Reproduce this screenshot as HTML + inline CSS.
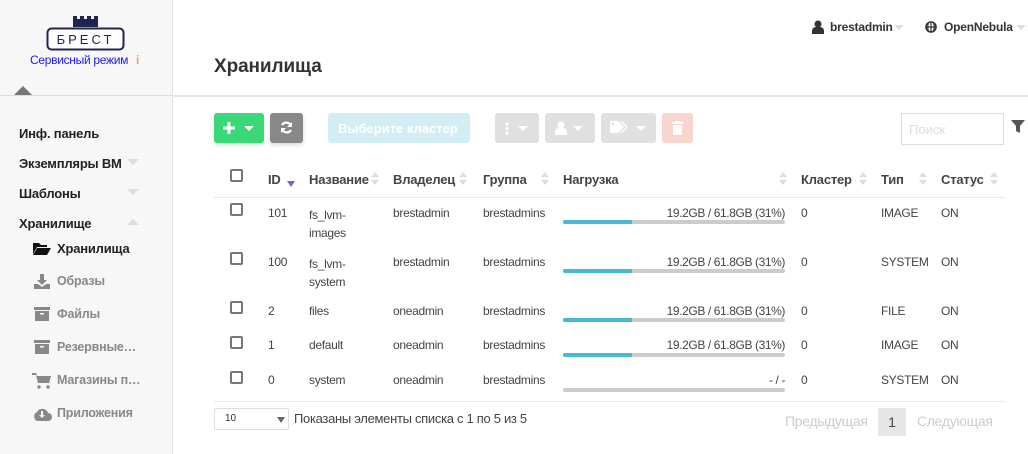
<!DOCTYPE html>
<html><head><meta charset="utf-8"><style>
*{margin:0;padding:0;box-sizing:border-box}
body{width:1028px;height:454px;overflow:hidden;background:#fff;font-family:"Liberation Sans","DejaVu Sans",sans-serif;position:relative;color:#333}
.a{position:absolute;white-space:nowrap}
#side{position:absolute;left:0;top:0;width:173px;height:454px;background:#f7f7f7;border-right:1px solid #e2e2e2}
.nav{font-size:13px;font-weight:bold;color:#222;letter-spacing:-0.2px}
.sub{font-size:12.5px;font-weight:bold;color:#888;letter-spacing:-0.2px}
.caret{width:0;height:0;border-left:6px solid transparent;border-right:6px solid transparent;border-top:6px solid #ddd;position:absolute}
.th{font-size:13px;font-weight:bold;color:#444;letter-spacing:-0.2px}
.td{font-size:12px;color:#444;letter-spacing:-0.3px}
.pct{position:absolute;right:243px;font-size:12px;color:#444;letter-spacing:-0.4px}
.cb{position:absolute;width:13px;height:13px;border:2px solid #777;border-radius:2px}
.bar{position:absolute;left:563px;width:222px;height:4px;background:#ccc;border-radius:2px}
.bar i{display:block;height:4px;width:69px;background:#4ab8d4;border-radius:2px 0 0 2px}
.btn{position:absolute;top:113px;height:30px;border-radius:3px}
</style></head><body>
<div id="side">
<svg class="a" style="left:46px;top:15px" width="79" height="37" viewBox="0 0 79 37">
<path d="M27 1h4v3h3v-3h4v3h3v-3h4v3h3v-3h4v11h-25z" fill="#1f2450"/>
<rect x="1.5" y="13.5" width="76" height="21" rx="4" fill="#fff" stroke="#1f2450" stroke-width="2"/>
<text x="39.5" y="29" text-anchor="middle" font-family="Liberation Sans" font-size="13" fill="#1f2450" letter-spacing="3">БРЕСТ</text>
</svg>
<div class="a" style="left:30px;top:53px;font-size:12px;color:#1a1af0;letter-spacing:-0.3px">Сервисный режим</div>
<div class="a" style="left:136px;top:53px;font-size:12px;color:#f0a070;font-weight:bold">i</div>
<div class="a" style="left:13px;top:86px;width:0;height:0;border-left:10px solid transparent;border-right:10px solid transparent;border-bottom:10px solid #777"></div>
<div class="a" style="left:0;top:95px;width:173px;border-top:1px solid #ddd"></div>
<div class="a nav" style="left:19px;top:126px">Инф. панель</div>
<div class="a nav" style="left:19px;top:156px">Экземпляры ВМ</div><div class="caret" style="left:127px;top:159px"></div>
<div class="a nav" style="left:19px;top:186px">Шаблоны</div><div class="caret" style="left:127px;top:189px"></div>
<div class="a nav" style="left:19px;top:216px">Хранилище</div><div class="a" style="left:127px;top:219px;border-left:6px solid transparent;border-right:6px solid transparent;border-bottom:6px solid #ddd"></div>
<svg class="a" style="left:33px;top:242px" width="18" height="13" viewBox="0 0 18 13"><path d="M0 1h6l2 2h6v2H4L0 12z M4 6h14l-4 7H0z" fill="#111"/></svg>
<div class="a nav" style="left:57px;top:241px">Хранилища</div>
<svg class="a" style="left:34px;top:274px" width="16" height="15" viewBox="0 0 16 15"><path d="M6 0h4v6h3l-5 5-5-5h3z M0 10h4l4 3 4-3h4v5H0z" fill="#888"/></svg>
<div class="a sub" style="left:57px;top:274px">Образы</div>
<svg class="a" style="left:34px;top:307px" width="16" height="14" viewBox="0 0 16 14"><path d="M0 0h16v3H0z M1 4h14v10H1z" fill="#888"/><rect x="6" y="6" width="4" height="1.5" fill="#f7f7f7"/></svg>
<div class="a sub" style="left:57px;top:307px">Файлы</div>
<svg class="a" style="left:34px;top:340px" width="16" height="14" viewBox="0 0 16 14"><path d="M0 0h16v3H0z M1 4h14v10H1z" fill="#888"/><rect x="6" y="6" width="4" height="1.5" fill="#f7f7f7"/></svg>
<div class="a sub" style="left:57px;top:340px">Резервные…</div>
<svg class="a" style="left:32px;top:373px" width="19" height="16" viewBox="0 0 19 16"><path d="M0 0h4l1 3h14l-2 7H6L4 2H0z" fill="#888"/><circle cx="7" cy="14" r="1.7" fill="#888"/><circle cx="16" cy="14" r="1.7" fill="#888"/></svg>
<div class="a sub" style="left:57px;top:373px">Магазины п…</div>
<svg class="a" style="left:32px;top:406px" width="20" height="15" viewBox="0 0 20 15"><path d="M5 15a5 5 0 0 1 0-9 6 6 0 0 1 11 1 4 4 0 0 1 0 8z" fill="#888"/><path d="M9 5h2v4h2l-3 3-3-3h2z" fill="#f7f7f7"/></svg>
<div class="a sub" style="left:57px;top:406px">Приложения</div>
</div>

<svg class="a" style="left:812px;top:20px" width="12" height="14" viewBox="0 0 12 14"><circle cx="6" cy="4" r="3.5" fill="#333"/><path d="M0 14v-3a4 4 0 0 1 4-4h4a4 4 0 0 1 4 4v3z" fill="#333"/></svg>
<div class="a" style="left:830px;top:20px;font-size:12px;font-weight:bold;color:#333;letter-spacing:-0.2px">brestadmin</div>
<div class="caret" style="left:894px;top:25px;border-left-width:5px;border-right-width:5px;border-top-width:5px"></div>
<svg class="a" style="left:925px;top:21px" width="12" height="12" viewBox="0 0 12 12"><circle cx="6" cy="6" r="5" fill="none" stroke="#333" stroke-width="1.6"/><path d="M1 6h10M6 1v10M3.5 1.5q-1.5 4.5 0 9M8.5 1.5q1.5 4.5 0 9" stroke="#333" fill="none" stroke-width="1.2"/></svg>
<div class="a" style="left:944px;top:20px;font-size:12px;font-weight:bold;color:#333;letter-spacing:-0.2px">OpenNebula</div>
<div class="caret" style="left:1016px;top:25px;border-left-width:5px;border-right-width:5px;border-top-width:5px"></div>

<div class="a" style="left:214px;top:56px;font-size:19px;font-weight:bold;color:#333;letter-spacing:-0.1px">Хранилища</div>
<div class="a" style="left:174px;top:95px;width:854px;border-top:2px solid #e6e6e6"></div>

<div class="btn" style="left:214px;width:50px;background:#3bd87a;box-shadow:0 2px 4px rgba(0,0,0,.15)"><svg class="a" style="left:9px;top:9px" width="12" height="12" viewBox="0 0 12 12"><path d="M4.5 0h3v4.5H12v3H7.5V12h-3V7.5H0v-3h4.5z" fill="#fff"/></svg><div class="a" style="left:30px;top:13px;border-left:5px solid transparent;border-right:5px solid transparent;border-top:5px solid #fff"></div></div>
<div class="btn" style="left:270px;width:33px;background:#888;box-shadow:0 2px 4px rgba(0,0,0,.15)"><svg class="a" style="left:10px;top:8px" width="13" height="13" viewBox="0 0 13 13"><path d="M11 5A5 5 0 0 0 2 4M2 8a5 5 0 0 0 9 1" stroke="#fff" stroke-width="2.2" fill="none"/><path d="M12 1v5H7zM1 12V7h5z" fill="#fff"/></svg></div>
<div class="btn" style="left:328px;width:142px;background:#d3edf4"><div class="a" style="left:10px;top:8px;color:#fff;font-size:13px;font-weight:bold">Выберите кластер</div></div>
<div class="btn" style="left:495px;width:44px;background:#e0e0e0"><svg class="a" style="left:10px;top:9px" width="4" height="13" viewBox="0 0 4 13"><circle cx="2" cy="2" r="1.6" fill="#fff"/><circle cx="2" cy="6.5" r="1.6" fill="#fff"/><circle cx="2" cy="11" r="1.6" fill="#fff"/></svg><div class="a" style="left:23px;top:13px;border-left:5px solid transparent;border-right:5px solid transparent;border-top:5px solid #fff"></div></div>
<div class="btn" style="left:545px;width:50px;background:#e0e0e0"><svg class="a" style="left:10px;top:8px" width="12" height="14" viewBox="0 0 12 14"><circle cx="6" cy="4" r="3.5" fill="#fff"/><path d="M0 14v-3a4 4 0 0 1 4-4h4a4 4 0 0 1 4 4v3z" fill="#fff"/></svg><div class="a" style="left:28px;top:13px;border-left:5px solid transparent;border-right:5px solid transparent;border-top:5px solid #fff"></div></div>
<div class="btn" style="left:601px;width:55px;background:#e0e0e0"><svg class="a" style="left:9px;top:8px" width="20" height="13" viewBox="0 0 20 13"><path d="M0 0h8l6 6-6 6H0z M10 0h2l6 6-6 6h-2l6-6z" fill="#fff"/><circle cx="3" cy="3" r="1.3" fill="#e0e0e0"/></svg><div class="a" style="left:35px;top:13px;border-left:5px solid transparent;border-right:5px solid transparent;border-top:5px solid #fff"></div></div>
<div class="btn" style="left:662px;width:31px;background:#f8d5cf"><svg class="a" style="left:10px;top:8px" width="11" height="14" viewBox="0 0 11 14"><path d="M0 1h11v2H0z M3 0h5v1H3z M1 4h9v10H1z" fill="#fff"/></svg></div>

<div class="a" style="left:901px;top:113px;width:103px;height:32px;border:1px solid #ddd"><div class="a" style="left:7px;top:8px;font-size:13px;color:#ddd">Поиск</div></div>
<svg class="a" style="left:1011px;top:120px" width="14" height="13" viewBox="0 0 14 13"><path d="M0 0h14L9 6v7L5 11V6z" fill="#555"/></svg>

<div class="cb" style="left:230px;top:169px"></div>
<div class="a th" style="left:268px;top:172px">ID</div>
<div class="a" style="left:287px;top:181px;border-left:4px solid transparent;border-right:4px solid transparent;border-top:6px solid #6868d8"></div>
<div class="a th" style="left:309px;top:172px">Название</div>
<div class="a th" style="left:393px;top:172px">Владелец</div>
<div class="a th" style="left:483px;top:172px">Группа</div>
<div class="a th" style="left:563px;top:172px">Нагрузка</div>
<div class="a th" style="left:801px;top:172px">Кластер</div>
<div class="a th" style="left:881px;top:172px">Тип</div>
<div class="a th" style="left:941px;top:172px">Статус</div>
<svg class="a" style="left:0;top:0" width="1028" height="200">
<g fill="#ddd">
<path d="M371 177l4-5 4 5zM371 180l4 5 4-5z"/>
<path d="M459 177l4-5 4 5zM459 180l4 5 4-5z"/>
<path d="M541 177l4-5 4 5zM541 180l4 5 4-5z"/>
<path d="M779 177l4-5 4 5zM779 180l4 5 4-5z"/>
<path d="M859 177l4-5 4 5zM859 180l4 5 4-5z"/>
<path d="M919 177l4-5 4 5zM919 180l4 5 4-5z"/>
<path d="M990 177l4-5 4 5zM990 180l4 5 4-5z"/>
</g></svg>
<div class="a" style="left:214px;top:197px;width:791px;border-top:1px solid #e8e8e8"></div>

<div class="cb" style="left:230px;top:203px"></div>
<div class="a td" style="left:268px;top:206px">101</div><div class="a td" style="left:309px;top:206px;line-height:18px">fs_lvm-<br>images</div>
<div class="a td" style="left:393px;top:206px">brestadmin</div><div class="a td" style="left:483px;top:206px">brestadmins</div>
<div class="pct" style="top:206px">19.2GB / 61.8GB (31%)</div><div class="bar" style="top:220px"><i></i></div>
<div class="a td" style="left:801px;top:206px">0</div><div class="a td" style="left:881px;top:206px">IMAGE</div><div class="a td" style="left:941px;top:206px">ON</div>

<div class="cb" style="left:230px;top:252px"></div>
<div class="a td" style="left:268px;top:255px">100</div><div class="a td" style="left:309px;top:255px;line-height:18px">fs_lvm-<br>system</div>
<div class="a td" style="left:393px;top:255px">brestadmin</div><div class="a td" style="left:483px;top:255px">brestadmins</div>
<div class="pct" style="top:255px">19.2GB / 61.8GB (31%)</div><div class="bar" style="top:269px"><i></i></div>
<div class="a td" style="left:801px;top:255px">0</div><div class="a td" style="left:881px;top:255px">SYSTEM</div><div class="a td" style="left:941px;top:255px">ON</div>

<div class="cb" style="left:230px;top:301px"></div>
<div class="a td" style="left:268px;top:304px">2</div><div class="a td" style="left:309px;top:304px">files</div>
<div class="a td" style="left:393px;top:304px">oneadmin</div><div class="a td" style="left:483px;top:304px">brestadmins</div>
<div class="pct" style="top:304px">19.2GB / 61.8GB (31%)</div><div class="bar" style="top:318px"><i></i></div>
<div class="a td" style="left:801px;top:304px">0</div><div class="a td" style="left:881px;top:304px">FILE</div><div class="a td" style="left:941px;top:304px">ON</div>

<div class="cb" style="left:230px;top:336px"></div>
<div class="a td" style="left:268px;top:338px">1</div><div class="a td" style="left:309px;top:338px">default</div>
<div class="a td" style="left:393px;top:338px">oneadmin</div><div class="a td" style="left:483px;top:338px">brestadmins</div>
<div class="pct" style="top:338px">19.2GB / 61.8GB (31%)</div><div class="bar" style="top:353px"><i></i></div>
<div class="a td" style="left:801px;top:338px">0</div><div class="a td" style="left:881px;top:338px">IMAGE</div><div class="a td" style="left:941px;top:338px">ON</div>

<div class="cb" style="left:230px;top:371px"></div>
<div class="a td" style="left:268px;top:373px">0</div><div class="a td" style="left:309px;top:373px">system</div>
<div class="a td" style="left:393px;top:373px">oneadmin</div><div class="a td" style="left:483px;top:373px">brestadmins</div>
<div class="pct" style="top:373px">- / -</div><div class="bar" style="top:388px"></div>
<div class="a td" style="left:801px;top:373px">0</div><div class="a td" style="left:881px;top:373px">SYSTEM</div><div class="a td" style="left:941px;top:373px">ON</div>
<div class="a" style="left:214px;top:401px;width:791px;border-top:1px solid #e8e8e8"></div>

<div class="a" style="left:214px;top:408px;width:75px;height:22px;border:1px solid #ddd;border-radius:2px"><div class="a" style="left:10px;top:4px;font-size:10px;color:#333">10</div><div class="a" style="left:62px;top:8px;border-left:4px solid transparent;border-right:4px solid transparent;border-top:6px solid #666"></div></div>
<div class="a" style="left:294px;top:411px;font-size:13px;color:#444;letter-spacing:-0.3px">Показаны элементы списка с 1 по 5 из 5</div>
<div class="a" style="left:785px;top:413px;font-size:14px;color:#ccc;letter-spacing:-0.3px">Предыдущая</div>
<div class="a" style="left:878px;top:408px;width:28px;height:28px;background:#e6e6e6;border-radius:2px;font-size:14px;color:#444;text-align:center;line-height:28px">1</div>
<div class="a" style="left:917px;top:413px;font-size:14px;color:#ccc;letter-spacing:-0.3px">Следующая</div>
</body></html>
